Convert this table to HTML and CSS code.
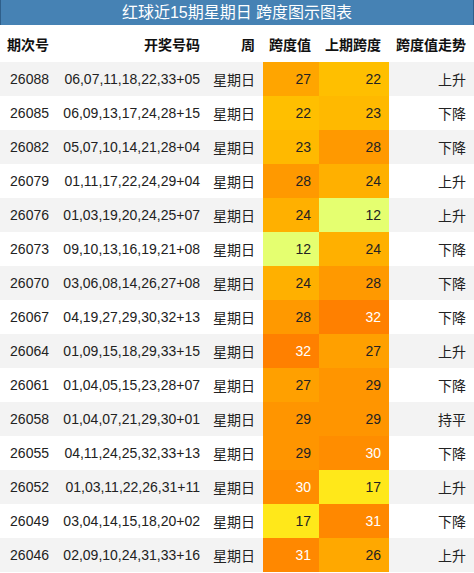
FILE: index.html
```html
<!DOCTYPE html>
<html lang="zh">
<head>
	<meta charset="UTF-8">
	<title>跨度图示图表</title>
	<link rel="stylesheet" href="styles.css">
</head>
<body>
	<div class="chart">
		<div class="title">红球近15期星期日 跨度图示图表</div>
		<table class="span-table">
			<colgroup>
				<col class="c-issue">
				<col class="c-balls">
				<col class="c-week">
				<col class="c-span">
				<col class="c-prev">
				<col class="c-trend">
			</colgroup>
			<thead>
				<tr>
					<th>期次号</th>
					<th>开奖号码</th>
					<th>周</th>
					<th>跨度值</th>
					<th>上期跨度</th>
					<th>跨度值走势</th>
				</tr>
			</thead>
			<tbody>
				<tr><td>26088</td><td>06,07,11,18,22,33+05</td><td>星期日</td><td class="heat" style="background:#ffa500">27</td><td class="heat" style="background:#ffbf00">22</td><td>上升</td></tr>
				<tr><td>26085</td><td>06,09,13,17,24,28+15</td><td>星期日</td><td class="heat" style="background:#ffbf00">22</td><td class="heat" style="background:#ffb900">23</td><td>下降</td></tr>
				<tr><td>26082</td><td>05,07,10,14,21,28+04</td><td>星期日</td><td class="heat" style="background:#ffb900">23</td><td class="heat" style="background:#ff9900">28</td><td>下降</td></tr>
				<tr><td>26079</td><td>01,11,17,22,24,29+04</td><td>星期日</td><td class="heat" style="background:#ff9900">28</td><td class="heat" style="background:#ffb000">24</td><td>上升</td></tr>
				<tr><td>26076</td><td>01,03,19,20,24,25+07</td><td>星期日</td><td class="heat" style="background:#ffb000">24</td><td class="heat" style="background:#e5ff70">12</td><td>上升</td></tr>
				<tr><td>26073</td><td>09,10,13,16,19,21+08</td><td>星期日</td><td class="heat" style="background:#e5ff70">12</td><td class="heat" style="background:#ffb000">24</td><td>下降</td></tr>
				<tr><td>26070</td><td>03,06,08,14,26,27+08</td><td>星期日</td><td class="heat" style="background:#ffb000">24</td><td class="heat" style="background:#ff9900">28</td><td>下降</td></tr>
				<tr><td>26067</td><td>04,19,27,29,30,32+13</td><td>星期日</td><td class="heat" style="background:#ff9900">28</td><td class="heat hot" style="background:#ff8000">32</td><td>下降</td></tr>
				<tr><td>26064</td><td>01,09,15,18,29,33+15</td><td>星期日</td><td class="heat hot" style="background:#ff8000">32</td><td class="heat" style="background:#ffa000">27</td><td>上升</td></tr>
				<tr><td>26061</td><td>01,04,05,15,23,28+07</td><td>星期日</td><td class="heat" style="background:#ffa000">27</td><td class="heat" style="background:#ff9500">29</td><td>下降</td></tr>
				<tr><td>26058</td><td>01,04,07,21,29,30+01</td><td>星期日</td><td class="heat" style="background:#ff9500">29</td><td class="heat" style="background:#ff9500">29</td><td>持平</td></tr>
				<tr><td>26055</td><td>04,11,24,25,32,33+13</td><td>星期日</td><td class="heat" style="background:#ff9500">29</td><td class="heat hot" style="background:#ff8d00">30</td><td>下降</td></tr>
				<tr><td>26052</td><td>01,03,11,22,26,31+11</td><td>星期日</td><td class="heat hot" style="background:#ff8d00">30</td><td class="heat" style="background:#ffe81a">17</td><td>上升</td></tr>
				<tr><td>26049</td><td>03,04,14,15,18,20+02</td><td>星期日</td><td class="heat" style="background:#ffe81a">17</td><td class="heat hot" style="background:#ff8800">31</td><td>下降</td></tr>
				<tr><td>26046</td><td>02,09,10,24,31,33+16</td><td>星期日</td><td class="heat hot" style="background:#ff8800">31</td><td class="heat" style="background:#ffa800">26</td><td>上升</td></tr>
			</tbody>
		</table>
	</div>
</body>
</html>
```

FILE: styles.css
```css
body {
	margin: 0;
	font-family: "Liberation Sans", "Noto Sans CJK SC", sans-serif;
	color: #222;
}

.chart {
	width: 474px;
}

.title {
	height: 25px;
	line-height: 25px;
	background-color: #4682b4;
	color: #fff;
	font-size: 16px;
	text-align: center;
	border-left: 1px solid #2f5f8a;
	border-right: 1px solid #2f5f8a;
	box-sizing: border-box;
}

.span-table {
	width: 100%;
	border-collapse: collapse;
	table-layout: fixed;
	font-size: 14px;
}

.c-issue { width: 57px; }
.c-balls { width: 151px; }
.c-week  { width: 55px; }
.c-span  { width: 56px; }
.c-prev  { width: 70px; }
.c-trend { width: 85px; }

.span-table th,
.span-table td {
	padding: 0 8px 0 0;
	text-align: right;
	white-space: nowrap;
}

.span-table th {
	height: 37px;
	font-weight: bold;
	color: #111;
}

.span-table td {
	height: 34px;
}

.span-table tbody tr:nth-child(odd) {
	background-color: #f3f3f3;
}

.span-table .hot {
	color: #fff;
}
```
